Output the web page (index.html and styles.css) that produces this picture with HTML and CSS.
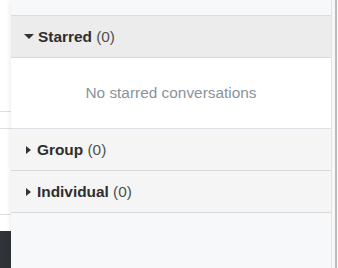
FILE: index.html
```html
<!DOCTYPE html>
<html lang="en">
<head>
  <meta charset="UTF-8">
  <meta name="viewport" content="width=device-width, initial-scale=1">
  <title>Conversations</title>
  <link rel="stylesheet" href="styles.css">
</head>
<body>
  <div class="page">
    <div class="behind">
      <div class="behind-top"></div>
      <div class="behind-row"></div>
      <div class="behind-row tall"></div>
      <div class="behind-gap"></div>
      <div class="behind-dark"></div>
    </div>

    <div class="panel">
      <div class="panel-top"></div>

      <div class="section open">
        <div class="section-head starred">
          <span class="caret down"></span>
          <b>Starred</b>&nbsp;<span class="count">(0)</span>
        </div>
        <div class="empty">No starred conversations</div>
      </div>

      <div class="section">
        <div class="section-head">
          <span class="caret"></span>
          <b>Group</b>&nbsp;<span class="count">(0)</span>
        </div>
      </div>

      <div class="section">
        <div class="section-head">
          <span class="caret"></span>
          <b>Individual</b>&nbsp;<span class="count">(0)</span>
        </div>
      </div>

      <div class="panel-rest"></div>
    </div>

    <div class="edge">
      <div class="scrollbar"></div>
    </div>
  </div>
</body>
</html>
```

FILE: styles.css
```css
html, body {
  margin: 0;
  padding: 0;
  height: 100%;
}
body {
  font-family: "Liberation Sans", Arial, sans-serif;
  font-size: 15.4px;
  color: #333;
  background: #fff;
  overflow: hidden;
}
.page {
  display: flex;
  height: 268px;
}

/* what shows behind the panel on the left */
.behind {
  width: 11px;
  display: flex;
  flex-direction: column;
  background: #fff;
}
.behind-top { height: 111px; border-bottom: 1px solid #dedede; }
.behind-row { height: 16px; border-bottom: 1px solid #dedede; }
.behind-row.tall { height: 85px; }
.behind-gap { height: 16px; }
.behind-dark { flex: 1; background: #2f3337; }

/* panel */
.panel {
  width: 320px;
  display: flex;
  flex-direction: column;
  background: #f7f8fa;
  border-right: 1px solid #e4e4e4;
  box-shadow: -2px 0 4px rgba(0, 0, 0, 0.06);
  position: relative;
}
.panel-top {
  height: 15px;
  border-bottom: 1px solid #dcdcdc;
}
.section-head {
  height: 41px;
  display: flex;
  align-items: center;
  padding-left: 13px;
  background: #f5f5f5;
  border-bottom: 1px solid #d9d9d9;
}
.section-head.starred {
  background: #ececec;
}
.section-head b {
  color: #2e2e2e;
  font-weight: bold;
}
.count {
  color: #505050;
}
.caret {
  width: 0;
  height: 0;
  margin-right: 6px;
  margin-left: 2px;
  border-top: 4px solid transparent;
  border-bottom: 4px solid transparent;
  border-left: 5px solid #333;
}
.caret.down {
  margin-left: 0;
  margin-right: 4px;
  border-left: 5px solid transparent;
  border-right: 5px solid transparent;
  border-top: 5px solid #333;
  border-bottom: 0;
}
.empty {
  height: 70px;
  display: flex;
  align-items: center;
  justify-content: center;
  background: #fff;
  color: #8a939c;
  border-bottom: 1px solid #dde1e6;
}
.panel-rest { flex: 1; }

/* right edge with the scroll bar */
.edge {
  flex: 1;
  display: flex;
  padding-left: 3px;
  background: #f8f8f8;
}
.scrollbar {
  width: 2px;
  background: #bcbcbc;
}
```
